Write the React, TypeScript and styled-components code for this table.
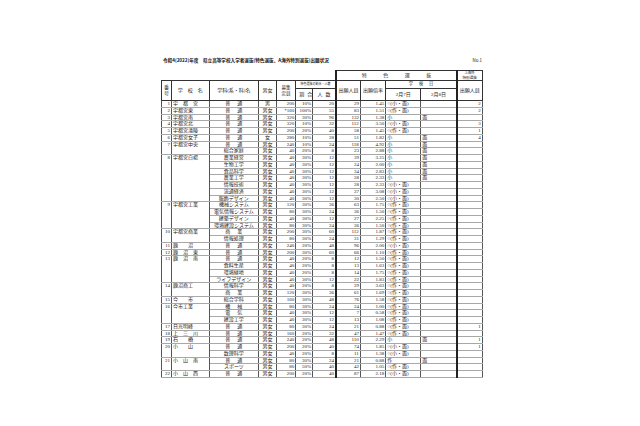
import React from "react";
import styled, { createGlobalStyle } from "styled-components";

const GlobalStyle = createGlobalStyle`
  html, body {
    margin: 0;
    padding: 0;
    background: #fff;
  }
  body {
    font-family: "Liberation Serif", "Noto Sans CJK JP", serif;
    color: #1c1c1c;
  }
`;

type Entry = {
  dept: string;
  sex: string;
  cap: string;
  rate: string;
  num: number;
  apply: number;
  ratio: string;
  d7: string;
  d8?: string;
  abroad?: number;
};

type School = { no: number; name: string; rows: Entry[] };

const r = (
  dept: string,
  sex: string,
  cap: string,
  rate: string,
  num: number,
  apply: number,
  ratio: string,
  d7: string,
  d8 = "",
  abroad?: number
): Entry => ({ dept, sex, cap, rate, num, apply, ratio, d7, d8, abroad });

const SK = "○(小・面)";
const SS = "○(作・面)";

const schools: School[] = [
  { no: 1, name: "宇都宮", rows: [r("普通", "男", "200", "10%", 20, 29, "1.45", SK, "", 2)] },
  { no: 2, name: "宇都宮東", rows: [r("普通", "男女", "*160", "100%", 55, 83, "1.51", SS, "", 2)] },
  { no: 3, name: "宇都宮南", rows: [r("普通", "男女", "320", "30%", 96, 132, "1.38", "小", "面")] },
  { no: 4, name: "宇都宮北", rows: [r("普通", "男女", "320", "10%", 32, 112, "3.50", SK, "", 3)] },
  { no: 5, name: "宇都宮清陵", rows: [r("普通", "男女", "200", "20%", 40, 58, "1.45", SS, "", 1)] },
  { no: 6, name: "宇都宮女子", rows: [r("普通", "女", "280", "10%", 28, 51, "1.82", "小", "面", 4)] },
  {
    no: 7,
    name: "宇都宮中央",
    rows: [
      r("普通", "男女", "240", "10%", 24, 118, "4.92", "小", "面"),
      r("総合家庭", "男女", "40", "20%", 8, 23, "2.88", "小", "面"),
    ],
  },
  {
    no: 8,
    name: "宇都宮白楊",
    rows: [
      r("農業経営", "男女", "40", "30%", 12, 39, "3.25", "小", "面"),
      r("生物工学", "男女", "40", "30%", 12, 24, "2.00", "小", "面"),
      r("食品科学", "男女", "40", "30%", 12, 34, "2.83", "小", "面"),
      r("農業工学", "男女", "40", "30%", 12, 28, "2.33", "小", "面"),
      r("情報技術", "男女", "40", "30%", 12, 28, "2.33", SK),
      r("流通経済", "男女", "40", "30%", 12, 37, "3.08", SK),
      r("服飾デザイン", "男女", "40", "30%", 12, 30, "2.50", SK),
    ],
  },
  {
    no: 9,
    name: "宇都宮工業",
    rows: [
      r("機械システム", "男女", "120", "30%", 36, 63, "1.75", SS),
      r("電気情報システム", "男女", "80", "30%", 24, 36, "1.50", SS),
      r("建築デザイン", "男女", "40", "30%", 12, 27, "2.25", SS),
      r("環境建設システム", "男女", "80", "30%", 24, 36, "1.50", SS),
    ],
  },
  {
    no: 10,
    name: "宇都宮商業",
    rows: [
      r("商業", "男女", "200", "30%", 60, 112, "1.87", SS),
      r("情報処理", "男女", "80", "30%", 24, 31, "1.29", SS),
    ],
  },
  { no: 11, name: "鹿沼", rows: [r("普通", "男女", "240", "20%", 48, 96, "2.00", SK)] },
  { no: 12, name: "鹿沼東", rows: [r("普通", "男女", "200", "30%", 60, 66, "1.10", SS)] },
  {
    no: 13,
    name: "鹿沼南",
    rows: [
      r("普通", "男女", "40", "20%", 8, 12, "1.50", SS),
      r("食料生産", "男女", "40", "20%", 8, 13, "1.63", SS),
      r("環境緑地", "男女", "40", "20%", 8, 14, "1.75", SS),
      r("ライフデザイン", "男女", "40", "30%", 12, 22, "1.83", SS),
    ],
  },
  {
    no: 14,
    name: "鹿沼商工",
    rows: [
      r("情報科学", "男女", "40", "20%", 8, 29, "3.63", SS),
      r("商業", "男女", "120", "30%", 36, 61, "1.69", SS),
    ],
  },
  { no: 15, name: "今市", rows: [r("総合学科", "男女", "160", "30%", 48, 76, "1.58", SS)] },
  {
    no: 16,
    name: "今市工業",
    rows: [
      r("機械", "男女", "80", "30%", 24, 24, "1.00", SS),
      r("電気", "男女", "40", "30%", 12, 7, "0.58", SS),
      r("建設工学", "男女", "40", "30%", 12, 13, "1.08", SS),
    ],
  },
  { no: 17, name: "日光明峰", rows: [r("普通", "男女", "80", "30%", 24, 21, "0.88", SS, "", 1)] },
  { no: 18, name: "上三川", rows: [r("普通", "男女", "160", "20%", 32, 47, "1.47", SS)] },
  { no: 19, name: "石橋", rows: [r("普通", "男女", "240", "20%", 48, 110, "2.29", "小", "面", 1)] },
  {
    no: 20,
    name: "小山",
    rows: [
      r("普通", "男女", "200", "20%", 40, 74, "1.85", SK, "", 1),
      r("数理科学", "男女", "40", "20%", 8, 11, "1.38", SK),
    ],
  },
  {
    no: 21,
    name: "小山南",
    rows: [
      r("普通", "男女", "80", "30%", 24, 21, "0.88", "作", "面"),
      r("スポーツ", "男女", "80", "50%", 40, 42, "1.05", SS),
    ],
  },
  { no: 22, name: "小山西", rows: [r("普通", "男女", "200", "20%", 40, 87, "2.18", SK)] },
];

// column widths, left to right (px)
const widths = [10, 37.6, 49.5, 17.7, 19.4, 17, 23.3, 24.4, 25.4, 35, 36, 25.4];
const ROW = 5.76;

const Page = styled.div`
  width: 640px;
  height: 426px;
  box-sizing: border-box;
  padding: 57px 0 0 161px;
  overflow: hidden;
`;

const TitleBar = styled.div`
  width: 321px;
  box-sizing: border-box;
  padding-left: 2px;
  display: flex;
  justify-content: space-between;
  align-items: baseline;
  font-family: "Noto Sans CJK JP", sans-serif;
  font-weight: 700;
  font-size: 4.6px;
  line-height: 6px;
  color: #111;
  white-space: pre;
`;

const PageNo = styled.span`
  font-weight: 400;
  font-size: 4.4px;
`;

const Sheet = styled.table`
  margin: 7px 0 0 0;
  width: 321px;
  border-collapse: collapse;
  table-layout: fixed;
  font-size: 5px;
  line-height: 5px;
`;

const Col = styled.col<{ $w: number }>`
  width: ${(p) => p.$w}px;
`;

const HeadRow = styled.tr<{ $h: number }>`
  height: ${(p) => p.$h}px;
`;

const Blank = styled.th`
  border: none;
  border-bottom: 1px solid #333;
  padding: 0;
`;

const Head = styled.th<{ $gap?: number; $size?: number; $thick?: boolean }>`
  padding: 0;
  font-weight: 400;
  text-align: center;
  vertical-align: middle;
  font-size: ${(p) => p.$size ?? 5}px;
  line-height: ${(p) => (p.$size ?? 5) + 0.6}px;
  letter-spacing: ${(p) => p.$gap ?? 0}em;
  text-indent: ${(p) => p.$gap ?? 0}em;
  border: 1px solid #333;
  ${(p) => (p.$thick ? "border-left: 2px solid #222;" : "")}
  white-space: nowrap;
`;

const Cell = styled.td<{ $thick?: boolean; $top?: boolean }>`
  padding: 0;
  vertical-align: ${(p) => (p.$top ? "top" : "middle")};
  border-top: 1px solid #a8a8a8;
  border-bottom: 1px solid #a8a8a8;
  border-left: ${(p) => (p.$thick ? "2px solid #222" : "1px solid #555")};
  border-right: 1px solid #555;
`;

const Text = styled.div<{ $align?: "left" | "right" | "center"; $gap?: number }>`
  height: ${ROW}px;
  line-height: ${ROW}px;
  padding: 0 ${(p) => (p.$align === "center" ? 0 : 1)}px;
  text-align: ${(p) => p.$align ?? "right"};
  letter-spacing: ${(p) => p.$gap ?? 0}em;
  text-indent: ${(p) => (p.$align === "center" ? p.$gap ?? 0 : 0)}em;
  white-space: nowrap;
  overflow: hidden;
`;

const nameGap = (name: string) => (name.length === 2 ? 2 : name.length === 3 ? 1 : 0);
const deptGap = (dept: string) => (dept.length === 2 ? 1.4 : 0);

const Header = () => (
  <thead>
    <HeadRow $h={10}>
      <Blank colSpan={7} />
      <Head colSpan={4} $gap={3.3} $thick>
        特色選抜
      </Head>
      <Head $size={3.6} $thick>
        A海外
        <br />
        特別選抜
      </Head>
    </HeadRow>
    <HeadRow $h={8}>
      <Head rowSpan={2}>
        番<br />号
      </Head>
      <Head rowSpan={2} $gap={1}>
        学校名
      </Head>
      <Head rowSpan={2}>学科(系・科)名</Head>
      <Head rowSpan={2}>男女</Head>
      <Head rowSpan={2} $size={4.6}>
        募集
        <br />
        定員
      </Head>
      <Head colSpan={2} $size={3}>
        特色選抜の割合・人数
      </Head>
      <Head rowSpan={2} $thick>
        出願人員
      </Head>
      <Head rowSpan={2}>出願倍率</Head>
      <Head colSpan={2} $size={4.2} $gap={1.4}>
        学検日
      </Head>
      <Head rowSpan={2} $thick>
        出願人員
      </Head>
    </HeadRow>
    <HeadRow $h={12}>
      <Head $gap={0.6}>割合</Head>
      <Head $gap={0.6}>人数</Head>
      <Head>2月7日</Head>
      <Head>2月8日</Head>
    </HeadRow>
  </thead>
);

const SchoolRows = ({ school }: { school: School }) => (
  <>
    {school.rows.map((e, i) => (
      <tr key={i}>
        {i === 0 && (
          <>
            <Cell rowSpan={school.rows.length} $top>
              <Text>{school.no}</Text>
            </Cell>
            <Cell rowSpan={school.rows.length} $top>
              <Text $align="left" $gap={nameGap(school.name)}>
                {school.name}
              </Text>
            </Cell>
          </>
        )}
        <Cell>
          <Text $align="center" $gap={deptGap(e.dept)}>
            {e.dept}
          </Text>
        </Cell>
        <Cell>
          <Text $align="center">{e.sex}</Text>
        </Cell>
        <Cell>
          <Text>{e.cap}</Text>
        </Cell>
        <Cell>
          <Text>{e.rate}</Text>
        </Cell>
        <Cell>
          <Text>{e.num}</Text>
        </Cell>
        <Cell $thick>
          <Text>{e.apply}</Text>
        </Cell>
        <Cell>
          <Text>{e.ratio}</Text>
        </Cell>
        <Cell>
          <Text $align="left">{e.d7}</Text>
        </Cell>
        <Cell>
          <Text $align="left">{e.d8}</Text>
        </Cell>
        <Cell $thick>
          <Text>{e.abroad ?? ""}</Text>
        </Cell>
      </tr>
    ))}
  </>
);

export default function App() {
  return (
    <>
      <GlobalStyle />
      <Page>
        <TitleBar>
          <span>{"令和4(2022)年度　県立高等学校入学者選抜(特色選抜、A海外特別選抜)出願状況"}</span>
          <PageNo>No.1</PageNo>
        </TitleBar>
        <Sheet>
          <colgroup>
            {widths.map((w, i) => (
              <Col key={i} $w={w} />
            ))}
          </colgroup>
          <Header />
          <tbody>
            {schools.map((s) => (
              <SchoolRows key={s.no} school={s} />
            ))}
          </tbody>
        </Sheet>
      </Page>
    </>
  );
}
